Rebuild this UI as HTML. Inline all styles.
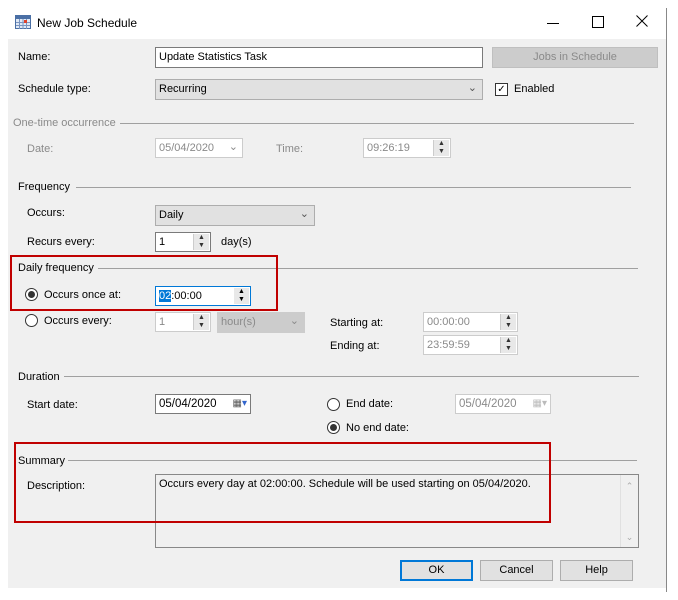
<!DOCTYPE html><html><head><style>
body{margin:0;width:678px;height:600px;background:#fff;font-family:"Liberation Sans",sans-serif;font-size:11px;color:#000;position:relative;overflow:hidden}
.a{position:absolute;white-space:nowrap}
.g{color:#8a8a8a}
.box{position:absolute;background:#fff;border:1px solid #7a7a7a;box-sizing:border-box;padding:2px 3px;line-height:14px}
.dis{border-color:#ccc;color:#8a8a8a}
.line{position:absolute;height:1px;background:#a0a0a0}
.sp{position:absolute;right:1px;top:1px;bottom:1px;width:15px;background:#e8e8e8;border-left:1px solid #ccc;font-size:7px;line-height:8px;text-align:center;color:#333}
.rad{position:absolute;width:11px;height:11px;border:1px solid #333;border-radius:50%;background:#fff}
.rad.on:after{content:"";position:absolute;left:2px;top:2px;width:7px;height:7px;border-radius:50%;background:#333}
.btn{position:absolute;background:#e1e1e1;border:1px solid #adadad;box-sizing:border-box;text-align:center;line-height:19px}
.red{position:absolute;border:2px solid #c00000;box-sizing:border-box}
</style></head><body>
<svg class="a" style="left:15px;top:15px" width="16" height="14"><rect x="0.5" y="0.5" width="15" height="13" fill="#dfe8f5" stroke="#4a6fa5"/><rect x="1" y="1" width="14" height="3" fill="#4a6fa5"/><path d="M1 7.5h14M1 10.5h14M4.5 4v10M8 4v10M11.5 4v10" stroke="#7a95c0"/><rect x="9" y="5" width="3" height="3" fill="#e0402a"/></svg>
<div class="a" style="left:37px;top:16px;font-size:12px">New Job Schedule</div>
<div class="a" style="left:547px;top:23px;width:12px;height:1px;background:#000"></div>
<div class="a" style="left:592px;top:16px;width:10px;height:10px;border:1px solid #000"></div>
<svg class="a" style="left:636px;top:15px" width="12" height="12"><path d="M0.5 0.5L11.5 11.5M11.5 0.5L0.5 11.5" stroke="#000"/></svg>
<div class="a" style="left:8px;top:39px;width:658px;height:549px;background:#f0f0f0"></div>
<div class="a" style="left:666px;top:8px;width:1px;height:584px;background:#888"></div>

<div class="a" style="left:18px;top:51px">Name:</div>
<div class="box" style="left:155px;top:47px;width:328px;height:21px">Update Statistics Task</div>
<div class="btn g" style="left:492px;top:47px;width:166px;height:21px;background:#ccc;border-color:#bfbfbf;color:#8a8a8a">Jobs in Schedule</div>
<div class="a" style="left:18px;top:83px">Schedule type:</div>
<div class="box" style="left:155px;top:79px;width:328px;height:21px;background:#e1e1e1;border-color:#adadad;line-height:15px">Recurring<span style="position:absolute;right:5px;top:1px;color:#555">&#8964;</span></div>
<div class="a" style="left:495px;top:83px;width:11px;height:11px;border:1px solid #333;background:#fff;font-size:10px;line-height:11px;text-align:center">&#10003;</div>
<div class="a" style="left:514px;top:83px">Enabled</div>

<div class="a g" style="left:13px;top:117px">One-time occurrence</div>
<div class="line" style="left:120px;top:123px;width:514px"></div>
<div class="a g" style="left:27px;top:143px">Date:</div>
<div class="box dis" style="left:155px;top:138px;width:88px;height:20px">05/04/2020<span style="position:absolute;right:4px;top:1px">&#8964;</span></div>
<div class="a g" style="left:276px;top:143px">Time:</div>
<div class="box dis" style="left:363px;top:138px;width:88px;height:20px">09:26:19<div class="sp">▲<br>▼</div></div>

<div class="a" style="left:18px;top:181px">Frequency</div>
<div class="line" style="left:76px;top:187px;width:555px"></div>
<div class="a" style="left:27px;top:207px">Occurs:</div>
<div class="box" style="left:155px;top:205px;width:160px;height:21px;background:#e1e1e1;border-color:#adadad;line-height:15px">Daily<span style="position:absolute;right:5px;top:1px;color:#555">&#8964;</span></div>
<div class="a" style="left:27px;top:236px">Recurs every:</div>
<div class="box" style="left:155px;top:232px;width:56px;height:20px">1<div class="sp">▲<br>▼</div></div>
<div class="a" style="left:221px;top:236px">day(s)</div>

<div class="a" style="left:18px;top:262px">Daily frequency</div>
<div class="line" style="left:98px;top:268px;width:540px"></div>
<div class="rad on" style="left:25px;top:288px"></div>
<div class="a" style="left:44px;top:289px">Occurs once at:</div>
<div class="box" style="left:155px;top:286px;width:96px;height:20px;border-color:#0078d7"><span style="background:#0078d7;color:#fff">02</span>:00:00<div class="sp" style="background:#e8e8e8;border:none;color:#000">▲<br>▼</div></div>
<div class="rad" style="left:25px;top:314px"></div>
<div class="a" style="left:44px;top:315px">Occurs every:</div>
<div class="box dis" style="left:155px;top:312px;width:56px;height:20px">1<div class="sp">▲<br>▼</div></div>
<div class="box" style="left:217px;top:312px;width:88px;height:21px;background:#ccc;border-color:#ccc;color:#8a8a8a">hour(s)<span style="position:absolute;right:5px;top:1px">&#8964;</span></div>
<div class="a" style="left:330px;top:317px">Starting at:</div>
<div class="box dis" style="left:423px;top:312px;width:95px;height:20px">00:00:00<div class="sp">▲<br>▼</div></div>
<div class="a" style="left:330px;top:340px">Ending at:</div>
<div class="box dis" style="left:423px;top:335px;width:95px;height:20px">23:59:59<div class="sp">▲<br>▼</div></div>

<div class="a" style="left:18px;top:371px">Duration</div>
<div class="line" style="left:64px;top:376px;width:575px"></div>
<div class="a" style="left:27px;top:399px">Start date:</div>
<div class="box" style="left:155px;top:394px;width:96px;height:20px;font-size:11.5px">05/04/2020<span style="position:absolute;right:3px;top:2px;color:#555;font-size:10px">&#9638;<span style="color:#36c">&#9662;</span></span></div>
<div class="rad" style="left:327px;top:398px"></div>
<div class="a" style="left:346px;top:398px">End date:</div>
<div class="box dis" style="left:455px;top:394px;width:96px;height:20px;font-size:11.5px">05/04/2020<span style="position:absolute;right:3px;top:2px;font-size:10px;color:#bbb">&#9638;&#9662;</span></div>
<div class="rad on" style="left:327px;top:421px"></div>
<div class="a" style="left:346px;top:422px">No end date:</div>

<div class="a" style="left:18px;top:455px">Summary</div>
<div class="line" style="left:68px;top:460px;width:569px"></div>
<div class="a" style="left:27px;top:480px">Description:</div>
<div class="box" style="left:155px;top:474px;width:484px;height:74px;background:#f0f0f0;border-color:#888">Occurs every day at 02:00:00. Schedule will be used starting on 05/04/2020.<div style="position:absolute;right:0;top:0;bottom:0;width:17px;border-left:1px solid #e0e0e0;color:#aaa;font-size:9px;text-align:center"><div style="position:absolute;top:4px;width:17px">&#8963;</div><div style="position:absolute;bottom:3px;width:17px">&#8964;</div></div></div>

<div class="btn" style="left:400px;top:560px;width:73px;height:21px;border:2px solid #0078d7;line-height:17px">OK</div>
<div class="btn" style="left:480px;top:560px;width:73px;height:21px">Cancel</div>
<div class="btn" style="left:560px;top:560px;width:73px;height:21px">Help</div>

<div class="red" style="left:10px;top:255px;width:268px;height:56px"></div>
<div class="red" style="left:14px;top:442px;width:537px;height:81px"></div>
</body></html>
